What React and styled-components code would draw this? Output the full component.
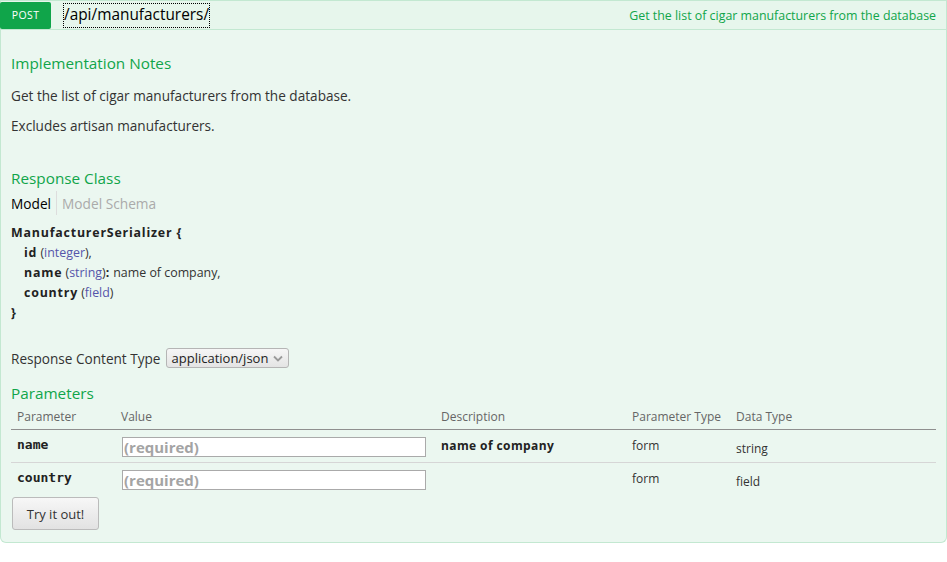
import React from "react";
import styled, { createGlobalStyle } from "styled-components";

const Global = createGlobalStyle`
  html, body { margin: 0; padding: 0; background: #fff; }
  body { font-family: "Open Sans", "DejaVu Sans", sans-serif; color: #333; }
  * { box-sizing: border-box; }
`;

const Endpoint = styled.div`
  width: 947px;
`;

const Heading = styled.div`
  display: flex;
  align-items: center;
  height: 30px;
  background: #e7f6ec;
  border: 1px solid #c3e8d1;
`;

const Method = styled.span`
  display: flex;
  align-items: center;
  justify-content: center;
  width: 51px;
  height: 27px;
  margin-left: -1px;
  background: #10a54a;
  color: #fff;
  font-size: 10.5px;
  letter-spacing: 0.4px;
  border-radius: 2px;
  text-transform: uppercase;
`;

const Path = styled.a`
  margin-left: 13px;
  padding: 1px 0 2px;
  font-size: 15.4px;
  line-height: 20px;
  color: #000;
  outline: 1px dotted #000;
  text-decoration: none;
`;

const Options = styled.a`
  margin-left: auto;
  margin-right: 10px;
  font-size: 12.4px;
  color: #10a54a;
`;

const Content = styled.div`
  background: #ebf7f0;
  border: 1px solid #c3e8d1;
  border-top: none;
  border-radius: 0 0 6px 6px;
  padding: 0 10px 12px;
  display: flex;
  flex-direction: column;
`;

const H4 = styled.h4`
  margin: ${(p) => p.$mt}px 0 0;
  font-weight: normal;
  font-size: 15.3px;
  line-height: 20px;
  color: #10a54a;
`;

const P = styled.p`
  margin: ${(p) => p.$mt}px 0 0;
  font-size: 13.6px;
  line-height: 20px;
  color: #333;
`;

const Tabs = styled.div`
  display: flex;
  align-items: stretch;
  margin-top: 3px;
  height: 24px;
`;

const Tab = styled.span`
  display: flex;
  align-items: center;
  font-size: 13.7px;
  color: ${(p) => (p.$active ? "#000" : "#aaa")};
  padding: ${(p) => (p.$active ? "0 5px 0 0" : "0 0 0 5px")};
  border-left: ${(p) => (p.$active ? "none" : "1px solid #ddd")};
`;

const Model = styled.div`
  margin-top: 8px;
  font-size: 12.4px;
  line-height: 20px;
  color: #333;
`;

const ModelLine = styled.div`
  padding-left: ${(p) => (p.$indent ? 13 : 0)}px;
  color: #333;
`;

const Strong = styled.b`
  font-weight: bold;
  color: #222;
  letter-spacing: ${(p) => p.$ls ?? 0.8}px;
`;

const TypeRef = styled.span`
  color: #55a;
`;

const ContentType = styled.div`
  display: flex;
  align-items: center;
  gap: 5px;
  margin-top: 25px;
  font-size: 13.6px;
  height: 20px;
  color: #333;
`;

const Select = styled.span`
  display: inline-flex;
  align-items: center;
  gap: 5px;
  height: 20px;
  padding: 0 5px;
  border: 1px solid #b5b5b5;
  border-radius: 3px;
  background: linear-gradient(#f6f6f6, #e4e4e4);
  font-size: 13px;
  color: #222;
`;

const Table = styled.table`
  margin-top: 2px;
  width: 925px;
  border-collapse: collapse;
  table-layout: fixed;
`;

const Th = styled.th`
  text-align: left;
  font-weight: normal;
  font-size: 12px;
  color: #666;
  padding: 0 6px;
  height: 24px;
  border-bottom: 1px solid #8f8f8f;
`;

const Tr = styled.tr`
  border-bottom: ${(p) => (p.$last ? "none" : "1px solid #d6d6d6")};
`;

const Td = styled.td`
  vertical-align: top;
  padding: ${(p) => (p.$pt ?? 7)}px 6px 0;
  height: 33px;
  font-size: 12px;
  color: #333;
`;

const Code = styled.td`
  vertical-align: top;
  padding: 7px 6px 0;
  height: 33px;
  font-family: "DejaVu Sans Mono", monospace;
  font-weight: bold;
  font-size: 13px;
  color: #222;
`;

const Input = styled.input`
  display: block;
  margin-left: 1px;
  width: 304px;
  height: 20px;
  border: 1px solid #aaa;
  background: #fff;
  padding: 0 1px;
  font-family: "Open Sans", sans-serif;
  font-size: 15px;
  font-weight: bold;
  &::placeholder { color: #a4a4a4; }
`;

const Button = styled.button`
  align-self: flex-start;
  margin-top: 2px;
  margin-left: 1px;
  width: 87px;
  height: 33px;
  border: 1px solid #bbb;
  border-radius: 3px;
  background: linear-gradient(#f7f7f7, #e2e2e2);
  font-family: "Open Sans", sans-serif;
  font-size: 13px;
  color: #333;
`;

const Chevron = () => (
  <svg width="10" height="7" viewBox="0 0 10 7">
    <path d="M1 1.5 L5 5.5 L9 1.5" fill="none" stroke="#999" strokeWidth="1.8" />
  </svg>
);

export default function App() {
  return (
    <Endpoint>
      <Global />
      <Heading>
        <Method>Post</Method>
        <Path href="#">/api/manufacturers/</Path>
        <Options>Get the list of cigar manufacturers from the database</Options>
      </Heading>
      <Content>
        <H4 $mt={23}>Implementation Notes</H4>
        <P $mt={13}>Get the list of cigar manufacturers from the database.</P>
        <P $mt={10}>Excludes artisan manufacturers.</P>
        <H4 $mt={32}>Response Class</H4>
        <Tabs>
          <Tab $active>Model</Tab>
          <Tab>Model Schema</Tab>
        </Tabs>
        <Model>
          <ModelLine><Strong>ManufacturerSerializer {"{"}</Strong></ModelLine>
          <ModelLine $indent><Strong>id</Strong> (<TypeRef>integer</TypeRef>),</ModelLine>
          <ModelLine $indent><Strong>name</Strong> (<TypeRef>string</TypeRef>)<Strong>:</Strong> name of company,</ModelLine>
          <ModelLine $indent><Strong>country</Strong> (<TypeRef>field</TypeRef>)</ModelLine>
          <ModelLine><Strong>{"}"}</Strong></ModelLine>
        </Model>
        <ContentType>
          Response Content Type
          <Select>application/json <Chevron /></Select>
        </ContentType>
        <H4 $mt={15}>Parameters</H4>
        <Table>
          <colgroup>
            <col style={{ width: 104 }} />
            <col style={{ width: 320 }} />
            <col style={{ width: 191 }} />
            <col style={{ width: 104 }} />
            <col style={{ width: 206 }} />
          </colgroup>
          <thead>
            <tr>
              <Th>Parameter</Th>
              <Th>Value</Th>
              <Th>Description</Th>
              <Th>Parameter Type</Th>
              <Th>Data Type</Th>
            </tr>
          </thead>
          <tbody>
            <Tr>
              <Code>name</Code>
              <Td><Input placeholder="(required)" /></Td>
              <Td><Strong $ls={0.4}>name of company</Strong></Td>
              <Td>form</Td>
              <Td $pt={10}>string</Td>
            </Tr>
            <Tr $last>
              <Code>country</Code>
              <Td><Input placeholder="(required)" /></Td>
              <Td></Td>
              <Td>form</Td>
              <Td $pt={10}>field</Td>
            </Tr>
          </tbody>
        </Table>
        <Button>Try it out!</Button>
      </Content>
    </Endpoint>
  );
}
